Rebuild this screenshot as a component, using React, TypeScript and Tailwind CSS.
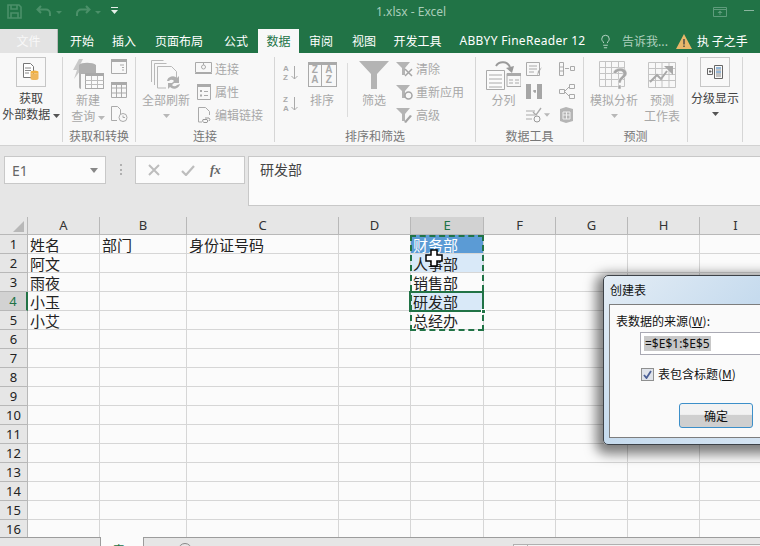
import React from 'react';
import { Lightbulb } from 'lucide-react';

const G = '#b4b4b4';
const columns = ['A', 'B', 'C', 'D', 'E', 'F', 'G', 'H', 'I'];
const rowCount = 16;

const cells: Record<string, string> = {
  A1: '姓名', B1: '部门', C1: '身份证号码', E1: '财务部',
  A2: '阿文', E2: '人事部',
  A3: '雨夜', E3: '销售部',
  A4: '小玉', E4: '研发部',
  A5: '小艾', E5: '总经办',
};

const Caret = ({ dark }: { dark?: boolean }) => (
  <svg width="7" height="4" viewBox="0 0 7 4" className="inline-block">
    <path d="M0 0h7L3.5 4z" fill={dark ? '#555' : '#b8b8b8'} />
  </svg>
);

const Sep = () => <div className="w-px h-[85px] bg-[#d6d6d6] shrink-0" />;

const Group = ({ className, label, children }: { className: string; label?: string; children: React.ReactNode }) => (
  <div className={`flex flex-col shrink-0 ${className}`}>
    <div className="flex h-[71px]">{children}</div>
    <div className="h-[16px] leading-[16px] text-center text-[12px] text-[#777]">{label}</div>
  </div>
);

const Big = ({ className, icon, lines, caret }: { className: string; icon: React.ReactNode; lines: React.ReactNode[]; caret?: boolean }) => (
  <div className={`flex flex-col items-center shrink-0 text-[12px] leading-[16px] text-[#a8a8a8] ${className}`}>
    <div className="h-[35px] flex items-center justify-center">{icon}</div>
    {lines.map((l, i) => (
      <div key={i} className="whitespace-nowrap h-[16px]">{l}</div>
    ))}
    {caret && <div className="h-[16px] flex items-center"><Caret /></div>}
  </div>
);

const SmallRow = ({ icon, text }: { icon: React.ReactNode; text?: string }) => (
  <div className="h-[23px] flex items-center gap-[3px] text-[12px] text-[#a8a8a8] whitespace-nowrap">
    <div className="w-[17px] flex justify-center">{icon}</div>
    {text}
  </div>
);

export default function App() {
  return (
    <div className="relative w-[760px] h-[546px] overflow-hidden bg-[#e6e6e6] text-[#222] font-['Noto_Sans_CJK_SC','Noto_Sans',sans-serif]">
      {/* title bar */}
      <div className="h-[29px] bg-[#217346] flex items-center relative">
        <svg width="15" height="15" viewBox="0 0 15 15" className="ml-[7px] mb-[7px]">
          <path d="M1 1h11l2 2v11H1z M4 1v4h6V1 M4 14V9h7v5" fill="none" stroke="#4b9069" strokeWidth="1.6" />
        </svg>
        <svg width="16" height="12" viewBox="0 0 16 12" className="ml-[14px] mb-[7px]">
          <path d="M5 1L1.5 4.5 5 8 M2 4.5h8a4 4 0 0 1 4 4V11" fill="none" stroke="#4b9069" strokeWidth="2" />
        </svg>
        <svg width="6" height="3" viewBox="0 0 6 3" className="ml-[4px] mb-[5px]"><path d="M0 0h6L3 3z" fill="#4b9069" /></svg>
        <svg width="16" height="12" viewBox="0 0 16 12" className="ml-[13px] mb-[7px]">
          <path d="M11 1l3.500 3.500L11 8 M14 4.500H6a4 4 0 0 0-4 4V11" fill="none" stroke="#4b9069" strokeWidth="2" />
        </svg>
        <svg width="6" height="3" viewBox="0 0 6 3" className="ml-[4px] mb-[5px]"><path d="M0 0h6L3 3z" fill="#4b9069" /></svg>
        <svg width="7" height="7" viewBox="0 0 7 7" className="ml-[10px] mb-[8px]">
          <path d="M0 0h7v1H0z M0 3h7L3.500 7z" fill="#e6efe9" />
        </svg>
        <div className="ml-[258px] mb-[5px] text-[12px] text-[#a9cdb9] font-['Noto_Sans',sans-serif] whitespace-nowrap">1.xlsx - Excel</div>
        <svg width="14" height="10" viewBox="0 0 14 10" className="ml-[267px] mb-[6px]">
          <path d="M.5.500h13v9H.500z M.5 2.500h13" fill="none" stroke="#5f9c7c" />
          <path d="M7 3.500L4.500 6h5z M6.500 6h1v2h-1z" fill="#5f9c7c" />
        </svg>
        <div className="ml-[17px] mb-[8px] w-[10px] h-px bg-[#8ab59f]" />
      </div>
      {/* tabs */}
      <div className="h-[24px] bg-[#217346] flex text-[12px] leading-[24px] text-white text-center whitespace-nowrap">
        <div className="w-[58px] bg-[#e3e3e3] text-[#f8f8f8] border-r border-[#bbb]">文件</div>
        <div className="w-[46px] pl-[2px]">开始</div>
        <div className="w-[40px]">插入</div>
        <div className="w-[70px]">页面布局</div>
        <div className="w-[44px]">公式</div>
        <div className="w-[41px] bg-[#f8f8f8] text-[#217346]">数据</div>
        <div className="w-[44px]">审阅</div>
        <div className="w-[42px]">视图</div>
        <div className="w-[65px]">开发工具</div>
        <div className="w-[145px] tracking-[0.3px] font-['Noto_Sans','Noto_Sans_CJK_SC',sans-serif]">ABBYY FineReader 12</div>
        <div className="flex items-center w-[71px] text-[#aecfbd] ml-[3px]">
          <Lightbulb size={15} strokeWidth={1.5} className="text-[#bcd8ca] mr-[9px]" />
          告诉我...
        </div>
        <svg width="16" height="15" viewBox="0 0 16 15" className="ml-[7px] mt-[5px]">
          <path d="M8 0l8 15H0z" fill="#e9b76a" />
          <path d="M7.300 5h1.400v5.500H7.300z M7.300 11.500h1.400V13H7.300z" fill="#444" />
        </svg>
        <div className="ml-[5px]">执 子之手</div>
      </div>
      {/* ribbon */}
      <div className="h-[93px] bg-[#f8f8f8] border-b border-[#d2d2d2] flex pt-[4px]">
        <div className="w-[62px] shrink-0 flex flex-col items-center text-[12px] leading-[16px] text-[#444]">
          <div className="w-[30px] h-[30px] border border-[#c6c6c6] flex items-center justify-center mb-[3px]">
            <svg width="16" height="18" viewBox="0 0 16 18">
              <path d="M.500.500h7l3 3v11h-10z" fill="#fff" stroke="#777" />
              <path d="M2 5h6M2 7.500h6M2 10h4" stroke="#888" />
              <ellipse cx="11.500" cy="9" rx="4" ry="1.600" fill="#f0b040" />
              <path d="M7.500 9v6.500c0 2 8 2 8 0V9c0 2-8 2-8 0" fill="#efb65a" />
            </svg>
          </div>
          <div>获取</div>
          <div className="whitespace-nowrap">外部数据 <Caret dark /></div>
        </div>
        <Sep />
        <Group className="w-[72px]" label="获取和转换">
          <Big
            className="w-[32px] ml-[9px]"
            icon={
              <svg width="32" height="32" viewBox="0 0 32 32">
                <path d="M7 0L1 11h4l-3 9 9-12H7l4-8z" fill="#c9c9c9" />
                <path d="M7 6c2-3 14-3 17 0v9H9v15c-1 0-2-1-2-2z" fill="#b0b0b0" />
                <rect x="13.500" y="14.500" width="18" height="15" fill="#fbfbfb" stroke="#a9a9a9" />
                <path d="M13.500 14h18v3h-18z" fill="#a9a9a9" />
                <path d="M13.500 21.500h18M13.500 25.500h18M19.500 17v12M25.500 17v12" stroke="#bdbdbd" />
              </svg>
            }
            lines={['新建', <>查询 <Caret /></>]}
          />
          <div className="flex flex-col ml-[7px] w-[17px] gap-[8px] pt-[2px]">
            <svg width="16" height="15" viewBox="0 0 16 15">
              <path d="M.500.500h15v14H.500z" fill="none" stroke="#aaa" /><path d="M0 0h16v3H0z" fill="#aaa" /><path d="M9 6h4M11 8.500h2M11 11h2" stroke="#aaa" />
            </svg>
            <svg width="16" height="16" viewBox="0 0 16 16">
              <path d="M.500.500h15v15H.500z M.5 6h15M.5 11h15M5.500 3v13M10.500 3v13" fill="none" stroke="#aaa" /><path d="M0 0h16v3H0z" fill="#aaa" />
            </svg>
            <svg width="17" height="16" viewBox="0 0 17 16">
              <path d="M.500.500h6l3 3V8M.5.500v14H6" fill="none" stroke="#aaa" /><circle cx="12" cy="11.500" r="4" fill="none" stroke="#aaa" /><path d="M12 9.500v2h2" fill="none" stroke="#aaa" />
            </svg>
          </div>
        </Group>
        <Sep />
        <Group className="w-[138px]" label="连接">
          <Big
            className="w-[48px] ml-[6px]"
            icon={
              <svg width="30" height="30" viewBox="0 0 30 30">
                <path d="M.500 22V.500h12M3.500 25V3.500h12M6.500 28V6.500h14l5 5V18M6.500 28H15" fill="#f8f8f8" stroke="#b8b8b8" />
                <path d="M16 21a6 6 0 0 1 10-3l2-2v7h-7l2-2a3 3 0 0 0-5 0z M29 24a6 6 0 0 1-10 3l-2 2v-6h6l-2 2a3 3 0 0 0 5 0z" fill="#b0b0b0" />
              </svg>
            }
            lines={['全部刷新']}
            caret
          />
          <div className="flex flex-col ml-[5px]">
            <SmallRow icon={<svg width="17" height="13" viewBox="0 0 17 13"><path d="M.5.500h16v10H.500z" fill="none" stroke="#aaa" /><path d="M0 11.500h17" stroke="#aaa" /><circle cx="8.500" cy="5" r="2" fill="none" stroke="#aaa" /><path d="M8.500 0v3" stroke="#aaa" /></svg>} text="连接" />
            <SmallRow icon={<svg width="14" height="16" viewBox="0 0 14 16"><path d="M.5.500h13v15H.500z" fill="none" stroke="#aaa" /><path d="M0 0h14v3H0zM3 6h2v2H3zM3 10.500h2v2H3zM7 7h4v1H7zM7 11h4v1H7z" fill="#aaa" /></svg>} text="属性" />
            <SmallRow icon={<svg width="14" height="16" viewBox="0 0 14 16"><path d="M1.500.500h7l4 4V8M1.500.500V15H5" fill="none" stroke="#aaa" /><path d="M6 12.500h4a2 2 0 0 1 0 3H7a2 2 0 0 1-1-3M8 11h4a2 2 0 0 1 0 3" fill="none" stroke="#999" /></svg>} text="编辑链接" />
          </div>
        </Group>
        <Sep />
        <Group className="w-[200px]" label="排序和筛选">
          <div className="flex flex-col ml-[8px] w-[16px] pt-[7px] gap-[13px] text-[8px] leading-[9px] text-[#aaa] font-['Liberation_Sans',sans-serif] font-bold">
            <div className="flex items-center h-[18px] gap-[2px]">
              <div className="flex flex-col"><span>A</span><span>Z</span></div>
              <svg width="7" height="14" viewBox="0 0 7 14"><path d="M3.500 0v13M.5 10l3 3 3-3" fill="none" stroke="#aaa" /></svg>
            </div>
            <div className="flex items-center h-[18px] gap-[2px]">
              <div className="flex flex-col"><span>Z</span><span>A</span></div>
              <svg width="7" height="14" viewBox="0 0 7 14"><path d="M3.500 0v13M.5 10l3 3 3-3" fill="none" stroke="#aaa" /></svg>
            </div>
          </div>
          <Big
            className="w-[30px] ml-[8px]"
            icon={
              <div className="w-[29px] h-[25px] border border-[#aaa] border-t-[3px] grid grid-cols-2 text-[10px] leading-[10px] text-center text-[#aaa] font-['Liberation_Sans',sans-serif] font-bold">
                <div className="border-r border-[#aaa]">Z<br />A</div>
                <div>A<br />Z</div>
              </div>
            }
            lines={['排序']}
          />
          <div className="w-px h-[54px] bg-[#dcdcdc] ml-[10px] mt-[6px]" />
          <Big
            className="w-[30px] ml-[11px]"
            icon={<svg width="30" height="28" viewBox="0 0 30 28"><path d="M0 0h30L18 13v15h-6V13z" fill={G} /></svg>}
            lines={['筛选']}
          />
          <div className="flex flex-col ml-[7px]">
            <SmallRow icon={<svg width="17" height="16" viewBox="0 0 17 16"><path d="M0 1h14L9 7v7H6V7z" fill={G} /><path d="M9 8l7 7M16 8l-7 7" stroke="#a5a5a5" strokeWidth="1.500" /></svg>} text="清除" />
            <SmallRow icon={<svg width="17" height="16" viewBox="0 0 17 16"><path d="M0 1h14L9 7v7H6V7z" fill={G} /><circle cx="12.500" cy="11.500" r="3.500" fill="none" stroke="#a5a5a5" strokeWidth="1.500" /></svg>} text="重新应用" />
            <SmallRow icon={<svg width="17" height="16" viewBox="0 0 17 16"><path d="M0 1h14L9 7v7H6V7z" fill={G} /><path d="M8 15l6-7 2 1-6 7z" fill="#a5a5a5" /></svg>} text="高级" />
          </div>
        </Group>
        <Sep />
        <Group className="w-[107px]" label="数据工具">
          <Big
            className="w-[35px] ml-[10px]"
            icon={
              <svg width="35" height="30" viewBox="0 0 35 30">
                <path d="M.500 10.500h18v19H.500z M3 15h13M3 19h13M3 23h13M3 27h13" fill="#fbfbfb" stroke="#aaa" />
                <path d="M21 13.500h14v13H21z" fill="none" stroke="#aaa" /><path d="M21 13h14v3H21z" fill="#aaa" /><path d="M23 20h4M29 20h4M23 23h4M29 23h4" stroke="#aaa" />
                <path d="M10 6a8 8 0 0 1 14 1" fill="none" stroke="#9a9a9a" strokeWidth="2" /><path d="M20 8l8-2-2 7z" fill="#9a9a9a" />
              </svg>
            }
            lines={['分列']}
          />
          <div className="flex flex-col ml-[4px] w-[20px]">
            <SmallRow icon={<svg width="16" height="14" viewBox="0 0 16 14"><path d="M.5.500h13v13H.500zM3 4h8M3 7h8M3 10h5" fill="none" stroke="#aaa" /><path d="M16 5l-5 9 1-5z" fill="#aaa" /></svg>} />
            <SmallRow icon={<svg width="16" height="15" viewBox="0 0 16 15"><path d="M0 0h5v15H0zM11 0h5v15h-5z" fill="#a6a6a6" /><path d="M7 7h3M9 6v3" stroke="#888" /></svg>} />
            <SmallRow icon={<svg width="16" height="16" viewBox="0 0 16 16"><path d="M0 4h9M0 8h9M0 12h6" stroke="#aaa" /><path d="M7 5l3 3 5-7" fill="none" stroke="#aaa" strokeWidth="1.300" /><circle cx="11" cy="12" r="3" fill="none" stroke="#999" /></svg>} />
          </div>
          <div className="w-[6px] flex items-end pb-[11px] ml-[-1px]"><Caret /></div>
          <div className="flex flex-col ml-[8px] w-[20px]">
            <SmallRow icon={<svg width="16" height="14" viewBox="0 0 16 14"><path d="M.5.500h4v13h-4zM.5 5h4M.5 9h4M11.500 4.500h4v4h-4z" fill="none" stroke="#aaa" /><path d="M6 6.500h4" stroke="#aaa" /></svg>} />
            <SmallRow icon={<svg width="16" height="15" viewBox="0 0 16 15"><path d="M.5 5.500h5v4h-5zM10.500.500h5v4h-5zM10.500 10.500h5v4h-5zM5.500 7.500l5-5M5.500 7.500l5 5" fill="none" stroke="#aaa" /></svg>} />
            <SmallRow icon={<svg width="15" height="16" viewBox="0 0 15 16"><path d="M1 2l6-2 7 2v12l-7 2-6-2z" fill="#b5b5b5" /><path d="M4 5h7v7H4zM4 8h7M7.500 5v7" fill="none" stroke="#eee" /></svg>} />
          </div>
        </Group>
        <Sep />
        <Group className="w-[103px]" label="预测">
          <Big
            className="w-[48px] ml-[6px]"
            icon={
              <svg width="30" height="33" viewBox="0 0 30 33" className="mt-[6px]">
                <path d="M.500.500h25v25H.500zM.5 6.500h25M.5 12.500h25M.5 18.500h25M6.500.500v25M12.500.500v25M19.500.500v25" fill="none" stroke="#c4c4c4" />
                <path d="M14 12c1-6 13-7 14 0 0 5-6 5-6 10h-3c0-6 5-6 5-9.500 0-3-6-3-7 .5z M19 24h3v4h-3z" fill="#a8a8a8" stroke="#f8f8f8" strokeWidth=".5" />
              </svg>
            }
            lines={['模拟分析']}
            caret
          />
          <Big
            className="w-[48px]"
            icon={
              <svg width="28" height="26" viewBox="0 0 28 26">
                <path d="M.500.500h27v25H.500zM.5 6.500h27M.5 12.500h27M.5 18.500h27M7.500.500v25M14 .500v25M21 .500v25" fill="none" stroke="#c4c4c4" />
                <path d="M2 20l7-7 4 4 6-8" fill="none" stroke="#a8a8a8" strokeWidth="2" /><path d="M16 4h9v9z" fill="#a8a8a8" />
              </svg>
            }
            lines={['预测', '工作表']}
          />
        </Group>
        <Sep />
        <div className="w-[54px] shrink-0 flex flex-col items-center text-[12px] leading-[16px] text-[#444]">
          <div className="w-[30px] h-[30px] border border-[#c6c6c6] flex items-center justify-center mb-[3px]">
            <svg width="16" height="14" viewBox="0 0 16 14">
              <path d="M.500 3.500h5v6h-5zM2 6.500h2.500M3 5v3" fill="none" stroke="#666" />
              <path d="M7.500.500h8v13h-8z" fill="none" stroke="#666" /><path d="M9 3h5M9 7h5" stroke="#2e75b6" /><path d="M9 5h5M9 9h5M9 11h5" stroke="#888" />
            </svg>
          </div>
          <div className="whitespace-nowrap">分级显示</div>
          <div className="h-[16px] flex items-center"><Caret dark /></div>
        </div>
        <Sep />
      </div>
      {/* formula bar */}
      <div className="h-[71px] pt-[10px] flex items-start">
        <div className="ml-[4px] w-[102px] h-[28px] bg-[#fbfbfb] border border-[#c8c8c8] flex items-center pl-[7px] pr-[7px] justify-between text-[14px] text-[#666] font-['Noto_Sans',sans-serif]">
          E1
          <svg width="8" height="5" viewBox="0 0 8 5"><path d="M0 0h8L4 5z" fill="#888" /></svg>
        </div>
        <div className="ml-[14px] w-[2px] h-[11px] mt-[8px] border-l-2 border-dotted border-[#b0b0b0]" />
        <div className="ml-[13px] w-[110px] h-[28px] bg-[#fbfbfb] border border-[#c8c8c8] flex items-center">
          <svg width="12" height="12" viewBox="0 0 12 12" className="ml-[12px]"><path d="M1 1l10 10M11 1L1 11" stroke="#bdbdbd" strokeWidth="2" /></svg>
          <svg width="14" height="11" viewBox="0 0 14 11" className="ml-[21px]"><path d="M1 6l4 4 8-9" fill="none" stroke="#bdbdbd" strokeWidth="2.200" /></svg>
          <span className="ml-[15px] text-[13px] italic font-bold text-[#666] font-['Liberation_Serif',serif]">fx</span>
        </div>
        <div className="ml-[3px] flex-1 h-[50px] bg-[#fbfbfb] border border-[#c8c8c8] border-r-0 pl-[11px] text-[14px] leading-[24px] text-[#444]">研发部</div>
      </div>
      {/* sheet */}
      <div className="grid grid-cols-[28px_72px_87px_152px_72px_73px_72px_72px_72px_72px] grid-rows-[18px] auto-rows-[19px] h-[320px] overflow-hidden">
        <div className="bg-[#e6e6e6] border-r border-b border-[#b8b8b8] flex items-end justify-end pr-[3px] pb-[2px]">
          <svg width="11" height="11" viewBox="0 0 11 11"><path d="M11 0v11H0z" fill="#b8b8b8" /></svg>
        </div>
        {columns.map((c) => (
          <div
            key={c}
            className={`border-r border-b border-[#b8b8b8] text-center text-[13px] leading-[17px] font-['Noto_Sans',sans-serif] ${c === 'E' ? 'bg-[#d2d2d2] text-[#217346]' : 'bg-[#e6e6e6] text-[#333]'}`}
          >
            {c}
          </div>
        ))}
        {Array.from({ length: rowCount }, (_, i) => i + 1).map((r) => (
          <React.Fragment key={r}>
            <div
              className={`border-b border-[#b8b8b8] text-center text-[13px] leading-[19px] font-['Noto_Sans',sans-serif] ${r === 4 ? 'bg-[#d2d2d2] text-[#217346] border-r-2 border-r-[#217346]' : 'bg-[#e6e6e6] text-[#222] border-r border-r-[#b8b8b8]'}`}
            >
              {r}
            </div>
            {columns.map((c) => {
              const id = `${c}${r}`;
              let tone = 'bg-[#fbfbfb] text-[#222]';
              if (id === 'E1') tone = 'bg-[#5b9bd5] text-white';
              if (id === 'E2' || id === 'E4') tone = 'bg-[#d9e9f8] text-[#222]';
              return (
                <div key={id} className={`border-r border-b border-[#d6d6d6] pl-[2px] text-[15px] leading-[19px] whitespace-nowrap overflow-hidden ${tone}`}>
                  {cells[id]}
                </div>
              );
            })}
          </React.Fragment>
        ))}
      </div>
      {/* sheet tabs */}
      <div className="h-[9px] bg-[#e6e6e6] border-t border-[#9c9c9c] flex">
        <div className="ml-[100px] w-[44px] h-[9px] -mt-px bg-[#fbfbfb] border-x border-[#9c9c9c] text-[12px] leading-[26px] text-[#217346] text-center overflow-hidden">表1</div>
        <div className="ml-[34px] mt-[5px] w-[14px] h-[14px] shrink-0 rounded-full border border-[#888]" />
        <div className="ml-[321px] mt-[6px] w-[15px] h-[6px] shrink-0 bg-[#f4f4f4] border border-[#b0b0b0]" />
        <div className="w-[232px] mt-[6px] h-[6px] shrink-0 bg-[#f4f4f4] border-t border-[#b0b0b0]" />
      </div>
      {/* copy marquee and active cell */}
      <div className="absolute left-[410px] top-[235px] w-[74px] h-[96px] border-2 border-dashed border-[#217346]" />
      <div className="absolute left-[409px] top-[291px] w-[75px] h-[21px] border-2 border-[#217346]" />
      <div className="absolute left-[481px] top-[309px] w-[5px] h-[5px] bg-[#217346] border border-white" />
      {/* mouse cursor */}
      <svg width="18" height="18" viewBox="0 0 18 18" className="absolute left-[425px] top-[249px]">
        <path d="M6 1h6v5h5v6h-5v5H6v-5H1V6h5z" fill="#fff" stroke="#000" strokeWidth="1.500" />
      </svg>
      {/* create table dialog */}
      <div className="absolute left-[603px] top-[275px] w-[180px] h-[170px] rounded-[5px] border border-[#3d4248] bg-gradient-to-br from-[#e4edf5] via-[#c6dbee] to-[#d6e5f3] shadow-[-2px_4px_12px_5px_rgba(0,0,0,0.5)] pt-[5px] pl-[5px]">
        <div className="h-[23px] text-[12px] leading-[17px] pl-[1px] text-[#111]">创建表</div>
        <div className="h-[134px] bg-[#fafafa] border border-[#7d7d7d] text-[12px] text-[#111] pl-[6px] pt-[7px]">
          <div className="leading-[17px] whitespace-nowrap">表数据的来源(<span className="underline">W</span>):</div>
          <div className="ml-[24px] mt-[3px] h-[23px] bg-white border border-[#a9a9b3] flex items-center pl-[3px]">
            <span className="bg-[#c8c8c8] px-px leading-[15px] font-['Noto_Sans',sans-serif] whitespace-nowrap">=$E$1:$E$5</span>
          </div>
          <div className="ml-[25px] mt-[10px] flex items-center gap-[4px]">
            <div className="w-[13px] h-[13px] border border-[#8e8f8f] bg-[#dfe3ea] flex items-center justify-center">
              <svg width="9" height="9" viewBox="0 0 9 9"><path d="M1 5l2.500 3L8 1" fill="none" stroke="#4a5f97" strokeWidth="1.800" /></svg>
            </div>
            <span className="whitespace-nowrap">表包含标题(<span className="underline">M</span>)</span>
          </div>
          <div className="ml-[63px] mt-[20px] w-[74px] h-[25px] rounded-[3px] border border-[#3c8fc9] bg-gradient-to-b from-[#f2f2f2] from-45% to-[#cfcfcf] to-50% text-center leading-[23px]">确定</div>
        </div>
      </div>
    </div>
  );
}
